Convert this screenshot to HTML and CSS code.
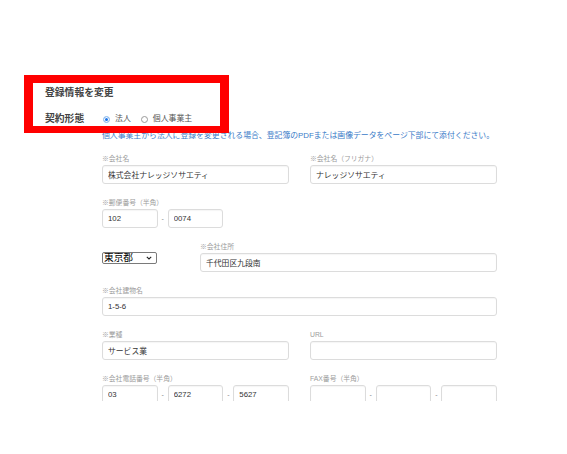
FILE: index.html
```html
<!DOCTYPE html>
<html lang="ja">
<head>
<meta charset="utf-8">
<title>登録情報を変更</title>
<link rel="stylesheet" href="styles.css">
</head>
<body>
<div class="page">
  <div class="annot"></div>
  <h2 class="title">登録情報を変更</h2>
  <div class="contract">
    <span class="contract-label">契約形態</span>
    <div class="radios">
      <label class="radio"><input type="radio" name="type" checked><span>法人</span></label>
      <label class="radio"><input type="radio" name="type"><span>個人事業主</span></label>
    </div>
  </div>
  <div class="content">
    <p class="note">個人事業主から法人に登録を変更される場合、登記簿のPDFまたは画像データをページ下部にて添付ください。</p>
    <div class="form">
      <div class="grid2">
        <div class="group">
          <div class="label">※会社名</div>
          <input class="field" type="text" value="株式会社ナレッジソサエティ">
        </div>
        <div class="group">
          <div class="label">※会社名（フリガナ）</div>
          <input class="field" type="text" value="ナレッジソサエティ">
        </div>
      </div>
      <div class="grid2">
        <div class="group">
          <div class="label">※郵便番号（半角）</div>
          <div class="split">
            <input class="field" type="text" value="102">
            <span class="dash">-</span>
            <input class="field" type="text" value="0074">
          </div>
        </div>
      </div>
      <div class="addr">
        <div class="pref">
          <select class="select">
            <option>東京都</option>
          </select>
        </div>
        <div class="group grow">
          <div class="label">※会社住所</div>
          <input class="field" type="text" value="千代田区九段南">
        </div>
      </div>
      <div class="group">
        <div class="label">※会社建物名</div>
        <input class="field" type="text" value="1-5-6">
      </div>
      <div class="grid2">
        <div class="group">
          <div class="label">※業種</div>
          <input class="field" type="text" value="サービス業">
        </div>
        <div class="group">
          <div class="label">URL</div>
          <input class="field" type="text" value="">
        </div>
      </div>
      <div class="grid2">
        <div class="group">
          <div class="label">※会社電話番号（半角）</div>
          <div class="split">
            <input class="field" type="text" value="03">
            <span class="dash">-</span>
            <input class="field" type="text" value="6272">
            <span class="dash">-</span>
            <input class="field" type="text" value="5627">
          </div>
        </div>
        <div class="group">
          <div class="label">FAX番号（半角）</div>
          <div class="split">
            <input class="field" type="text" value="">
            <span class="dash">-</span>
            <input class="field" type="text" value="">
            <span class="dash">-</span>
            <input class="field" type="text" value="">
          </div>
        </div>
      </div>
    </div>
  </div>
</div>
</body>
</html>
```

FILE: styles.css
```css
html, body {
  margin: 0;
  padding: 0;
  background: #fff;
}

body {
  font-family: "Liberation Sans", "Noto Sans CJK JP", sans-serif;
  color: #333;
}

.page {
  position: relative;
  height: 401px;
  overflow: hidden;
  padding: 86px 0 0 45px;
  box-sizing: border-box;
}

.annot {
  position: absolute;
  left: 24px;
  top: 75px;
  width: 205px;
  height: 58px;
  box-sizing: border-box;
  border-style: solid;
  border-color: #ff0000;
  border-width: 8px 9px 7px 9px;
  z-index: 2;
}

.title {
  margin: 0;
  font-size: 9.8px;
  line-height: 14px;
  font-weight: bold;
  color: #444;
}

.contract {
  display: flex;
  align-items: center;
  margin-top: 12px;
  height: 14px;
}

.contract-label {
  width: 57px;
  font-size: 9.8px;
  font-weight: bold;
  color: #444;
  line-height: 14px;
}

.radios {
  display: flex;
  align-items: center;
  gap: 9px;
}

.radio {
  display: flex;
  align-items: center;
  gap: 5px;
  font-size: 7.9px;
  color: #555;
  line-height: 10px;
}

.radio input {
  appearance: none;
  -webkit-appearance: none;
  margin: 0 0 0 1px;
  width: 7px;
  height: 7px;
  border-radius: 50%;
  border: 1px solid #9a9a9a;
  box-sizing: border-box;
  background: #fff;
}

.radio input:checked {
  border-color: #a9cdf0;
  background: #1a73e8;
  box-shadow: inset 0 0 0 1px #fff;
}

.content {
  padding-left: 57px;
  width: 395px;
}

.note {
  margin: 5px 0 0;
  font-size: 7.85px;
  line-height: 10px;
  color: #3a7bc8;
  white-space: nowrap;
}

.form {
  margin-top: 13px;
  width: 395px;
}

.grid2 {
  display: grid;
  grid-template-columns: 187px 187px;
  column-gap: 21px;
}

.group {
  margin-bottom: 14px;
}

.label {
  font-size: 6.8px;
  line-height: 10px;
  margin-bottom: 1px;
  color: #9b9b9b;
  white-space: nowrap;
}

.field {
  display: block;
  width: 100%;
  height: 19px;
  box-sizing: border-box;
  border: 1px solid #dcdcdc;
  border-radius: 3px;
  box-shadow: inset 0 1px 1px rgba(0, 0, 0, 0.04);
  padding: 0 5px;
  margin: 0;
  font-family: inherit;
  font-size: 7.8px;
  color: #333;
  background: #fff;
  outline: none;
}

.split {
  display: grid;
  grid-template-columns: 1fr 10px 1fr 10px 1fr;
  align-items: center;
}

.dash {
  text-align: center;
  font-size: 7px;
  color: #888;
  line-height: 19px;
}

.addr {
  display: flex;
}

.pref {
  width: 98px;
  flex: none;
  padding-top: 10px;
}

.select {
  appearance: none;
  -webkit-appearance: none;
  display: block;
  width: 55px;
  height: 12px;
  box-sizing: border-box;
  margin: 0;
  padding: 0 0 0 1px;
  border: 1px solid #7a7a7a;
  border-radius: 2px;
  font-family: "Liberation Sans", "Noto Sans CJK JP", sans-serif;
  font-size: 9.7px;
  line-height: 10px;
  color: #000;
  background-color: #fff;
  background-image: url("data:image/svg+xml,%3Csvg xmlns='http://www.w3.org/2000/svg' width='6' height='4' viewBox='0 0 6 4'%3E%3Cpath d='M0.8 0.8 L3 3 L5.2 0.8' fill='none' stroke='%23222' stroke-width='1.1'/%3E%3C/svg%3E");
  background-repeat: no-repeat;
  background-position: right 4px center;
  background-size: 6px 4px;
}

.grow {
  flex: 1;
}
```
